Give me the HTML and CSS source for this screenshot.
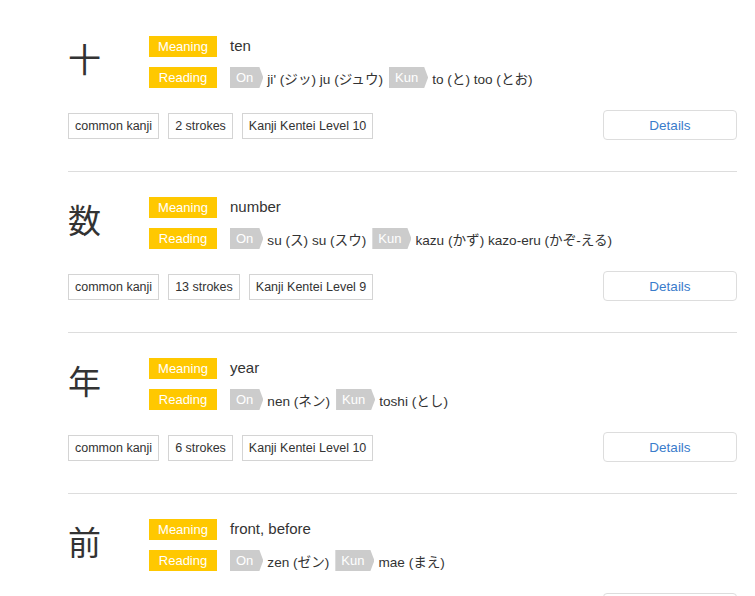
FILE: index.html
```html
<!DOCTYPE html>
<html lang="en">
<head>
<meta charset="utf-8">
<link rel="stylesheet" href="styles.css">
</head>
<body>
<div class="list">
  <div class="entry">
    <div class="top">
      <div class="kanji">十</div>
      <div class="info">
        <div class="row"><span class="badge">Meaning</span><span class="meaning">ten</span></div>
        <div class="row"><span class="badge">Reading</span><span class="tag">On</span><span class="val">ji' (ジッ) ju (ジュウ)</span><span class="tag">Kun</span><span class="val">to (と) too (とお)</span></div>
      </div>
    </div>
    <div class="bottom">
      <div class="labels"><span class="label">common kanji</span><span class="label">2 strokes</span><span class="label">Kanji Kentei Level 10</span></div>
      <button class="details">Details</button>
    </div>
  </div>
  <div class="entry">
    <div class="top">
      <div class="kanji">数</div>
      <div class="info">
        <div class="row"><span class="badge">Meaning</span><span class="meaning">number</span></div>
        <div class="row"><span class="badge">Reading</span><span class="tag">On</span><span class="val">su (ス) su (スウ)</span><span class="tag">Kun</span><span class="val">kazu (かず) kazo-eru (かぞ-える)</span></div>
      </div>
    </div>
    <div class="bottom">
      <div class="labels"><span class="label">common kanji</span><span class="label">13 strokes</span><span class="label">Kanji Kentei Level 9</span></div>
      <button class="details">Details</button>
    </div>
  </div>
  <div class="entry">
    <div class="top">
      <div class="kanji">年</div>
      <div class="info">
        <div class="row"><span class="badge">Meaning</span><span class="meaning">year</span></div>
        <div class="row"><span class="badge">Reading</span><span class="tag">On</span><span class="val">nen (ネン)</span><span class="tag">Kun</span><span class="val">toshi (とし)</span></div>
      </div>
    </div>
    <div class="bottom">
      <div class="labels"><span class="label">common kanji</span><span class="label">6 strokes</span><span class="label">Kanji Kentei Level 10</span></div>
      <button class="details">Details</button>
    </div>
  </div>
  <div class="entry">
    <div class="top">
      <div class="kanji">前</div>
      <div class="info">
        <div class="row"><span class="badge">Meaning</span><span class="meaning">front, before</span></div>
        <div class="row"><span class="badge">Reading</span><span class="tag">On</span><span class="val">zen (ゼン)</span><span class="tag">Kun</span><span class="val">mae (まえ)</span></div>
      </div>
    </div>
    <div class="bottom">
      <div class="labels"><span class="label">common kanji</span><span class="label">9 strokes</span><span class="label">Kanji Kentei Level 9</span></div>
      <button class="details">Details</button>
    </div>
  </div>
</div>
</body>
</html>
```
FILE: styles.css
```css
html, body {
  margin: 0;
  background: #fff;
}
body {
  font-family: "Liberation Sans", Arial, "Noto Sans CJK JP", sans-serif;
  color: #333;
  font-size: 14px;
}
.list {
  padding: 11px 0 0 68px;
  width: 669px;
}
.entry {
  padding: 25px 0 31px;
  border-bottom: 1px solid #ddd;
}
.top {
  display: flex;
  align-items: center;
  height: 52px;
}
.kanji {
  width: 81px;
  font-family: "Noto Sans CJK JP", sans-serif;
  font-size: 33px;
  line-height: 44px;
  padding-bottom: 8px;
  color: #333;
}
.info {
  display: flex;
  flex-direction: column;
  gap: 10px;
}
.row {
  display: flex;
  align-items: center;
  height: 21px;
}
.badge {
  width: 68px;
  height: 21px;
  line-height: 21px;
  background: #ffc800;
  color: #fff;
  font-size: 13px;
  text-align: center;
  margin-right: 13px;
}
.meaning {
  font-size: 15px;
  color: #333;
  margin-top: -3px;
  white-space: nowrap;
}
.val {
  font-size: 13.6px;
  color: #333;
  margin-right: 6px;
  white-space: nowrap;
}
.tag {
  height: 21px;
  line-height: 21px;
  background: #ccc;
  color: #fff;
  font-size: 13px;
  padding: 0 10px 0 6px;
  margin-right: 4px;
  clip-path: polygon(0 0, calc(100% - 4px) 0, 100% 50%, calc(100% - 4px) 100%, 0 100%);
}
.bottom {
  display: flex;
  justify-content: space-between;
  align-items: center;
  margin-top: 22px;
  height: 30px;
}
.labels {
  display: flex;
  gap: 9px;
  margin-top: 2px;
}
.label {
  border: 1px solid #d4d4d4;
  height: 24px;
  line-height: 24px;
  padding: 0 6px;
  font-size: 12.5px;
  color: #333;
}
.details {
  width: 134px;
  height: 30px;
  border: 1px solid #ddd;
  border-radius: 4px;
  background: #fff;
  color: #3a7ccb;
  font-family: "Liberation Sans", Arial, sans-serif;
  font-size: 13.5px;
  padding: 0;
}
```
